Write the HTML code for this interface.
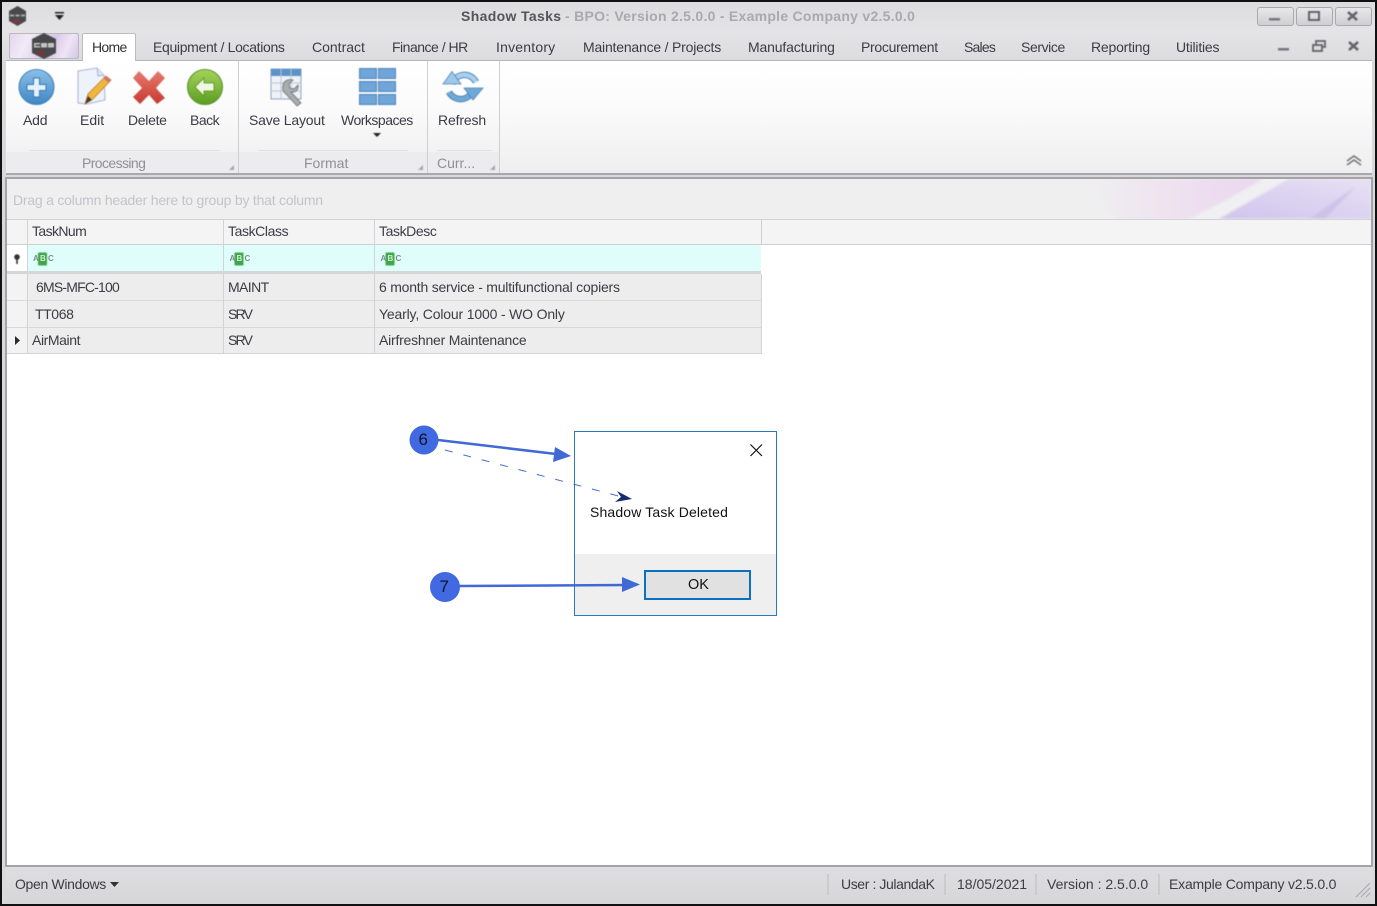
<!DOCTYPE html>
<html>
<head>
<meta charset="utf-8">
<title>Shadow Tasks</title>
<style>
html,body{margin:0;padding:0;background:#000;}
#p{position:relative;width:1377px;height:906px;overflow:hidden;background:#d9d9db;font-family:"Liberation Sans",sans-serif;font-size:14px;color:#3c3c42;}
.t{position:absolute;white-space:nowrap;line-height:16px;filter:blur(.35px);}
.b{position:absolute;}
svg{position:absolute;overflow:visible;}
.i{filter:blur(.4px);}
.abc{position:absolute;font-size:8px;line-height:10px;color:#7d8d84;font-weight:bold;filter:blur(.2px);}
</style>
</head>
<body>
<div id="p">
<!-- title and tab background -->
<div class="b" style="left:2px;top:2px;width:1373px;height:58px;background:linear-gradient(#dcdcde,#e4e4e6 50%,#dcdcde)"></div>

<!-- app icon small -->
<svg class="i" style="left:0;top:0" width="70" height="30">
<polygon points="17.500,6 26,11 26,21 17.500,26 9,21 9,11" fill="#49494b"/>
<path d="M10 14.500h4v2h-4zM15.500 14.500h4v2h-4zM21 14.500h4v2h-4z" fill="#a8a8a8"/>
<circle cx="16" cy="21" r="2.800" fill="#7c3a3a"/>
<rect x="55" y="12" width="9" height="1.500" fill="#222"/>
<polygon points="55,15 64,15 59.500,20" fill="#222"/>
</svg>
<div class="t" style="left:461px;top:8px;font-weight:bold;color:#555559;letter-spacing:.35px">Shadow Tasks</div>
<div class="t" style="left:565px;top:8px;font-weight:bold;color:#a9a9ae;letter-spacing:.27px">- BPO: Version 2.5.0.0 - Example Company v2.5.0.0</div>

<!-- window buttons -->
<div class="b" style="left:1257px;top:7px;width:35px;height:17px;border:1px solid #a9a9ad;border-radius:3px;background:linear-gradient(#e8e8ea,#cfcfd2)"></div>
<div class="b" style="left:1296px;top:7px;width:35px;height:17px;border:1px solid #a9a9ad;border-radius:3px;background:linear-gradient(#e8e8ea,#cfcfd2)"></div>
<div class="b" style="left:1335px;top:7px;width:35px;height:17px;border:1px solid #a9a9ad;border-radius:3px;background:linear-gradient(#e8e8ea,#cfcfd2)"></div>
<svg class="i" style="left:0;top:0" width="1377" height="60">
<rect x="1269" y="18" width="11" height="2.500" fill="#77777b"/>
<rect x="1309" y="12" width="10" height="8" fill="none" stroke="#66666a" stroke-width="2"/>
<path d="M1348 12L1357 20M1357 12L1348 20" stroke="#66666a" stroke-width="2.600"/>
<rect x="1278" y="48" width="11" height="2.500" fill="#77777b"/>
<rect x="1316" y="41" width="9" height="6" fill="none" stroke="#66666a" stroke-width="1.800"/>
<rect x="1313" y="45" width="9" height="6" fill="#dcdcde" stroke="#66666a" stroke-width="1.800"/>
<path d="M1349 42L1358 50M1358 42L1349 50" stroke="#66666a" stroke-width="2.600"/>
</svg>

<!-- app button -->
<div class="b" style="left:9px;top:33px;width:68px;height:24px;border:1px solid #b9b9bd;border-radius:2px;background:linear-gradient(115deg,#e3d6ee,#f2eaf6 25%,#d9c8ea 60%,#efe5f5 80%,#d5c4e8)"></div>
<svg class="i" style="left:0;top:0" width="80" height="62">
<polygon points="44,33 56,39 56,53 44,59 32,53 32,39" fill="#48484a"/>
<path d="M34 43h6v1.500h-4.500v1.500h4.500v1.500h-6zM41 43h6v4.500h-6zM48 43h6v4.500h-6z" fill="#c4c4c4"/>
<circle cx="41" cy="53" r="3" fill="#7a3636"/>
</svg>

<!-- ribbon panel -->
<div class="b" style="left:6px;top:60px;width:1366px;height:113px;border-top:1px solid #b5b5b9;background:linear-gradient(#ffffff,#fbfbfc 40%,#eeeeef);box-sizing:border-box"></div>
<div class="b" style="left:6px;top:173px;width:1366px;height:2px;background:#a9a9ad"></div>
<!-- Home tab -->
<div class="b" style="left:82px;top:33px;width:54px;height:28px;background:#fff;border:1px solid #bcbcc0;border-bottom:none;border-radius:2px 2px 0 0;box-sizing:border-box"></div>
<div class="t" style="left:92px;top:39px;color:#333;letter-spacing:-.7px">Home</div>
<div class="t" style="left:153px;top:39px;letter-spacing:-.33px">Equipment / Locations</div>
<div class="t" style="left:312px;top:39px">Contract</div>
<div class="t" style="left:392px;top:39px;letter-spacing:-.5px">Finance / HR</div>
<div class="t" style="left:496px;top:39px;letter-spacing:.2px">Inventory</div>
<div class="t" style="left:583px;top:39px;letter-spacing:-.2px">Maintenance / Projects</div>
<div class="t" style="left:748px;top:39px;letter-spacing:-.15px">Manufacturing</div>
<div class="t" style="left:861px;top:39px;letter-spacing:-.3px">Procurement</div>
<div class="t" style="left:964px;top:39px;letter-spacing:-.8px">Sales</div>
<div class="t" style="left:1021px;top:39px;letter-spacing:-.4px">Service</div>
<div class="t" style="left:1091px;top:39px;letter-spacing:-.2px">Reporting</div>
<div class="t" style="left:1176px;top:39px;letter-spacing:-.2px">Utilities</div>

<!-- ribbon groups -->
<div class="b" style="left:238px;top:61px;width:1px;height:112px;background:#cfcfd2"></div>
<div class="b" style="left:427px;top:61px;width:1px;height:112px;background:#cfcfd2"></div>
<div class="b" style="left:499px;top:61px;width:1px;height:112px;background:#cfcfd2"></div>
<div class="b" style="left:7px;top:152px;width:231px;height:21px;background:#ececee"></div>
<div class="b" style="left:239px;top:152px;width:188px;height:21px;background:#ececee"></div>
<div class="b" style="left:428px;top:152px;width:71px;height:21px;background:#ececee"></div>
<div class="b" style="left:30px;top:150px;width:190px;height:1px;background:#e0e0e2"></div>
<div class="b" style="left:258px;top:150px;width:150px;height:1px;background:#e0e0e2"></div>
<div class="b" style="left:437px;top:150px;width:55px;height:1px;background:#e0e0e2"></div>

<svg class="i" style="left:0;top:0" width="520" height="175">
<defs>
<linearGradient id="bl" x1="0" y1="0" x2="0" y2="1"><stop offset="0" stop-color="#8cc0e8"/><stop offset="1" stop-color="#3f86c6"/></linearGradient>
<linearGradient id="gr" x1="0" y1="0" x2="0" y2="1"><stop offset="0" stop-color="#a6d35a"/><stop offset="1" stop-color="#5a9e22"/></linearGradient>
<linearGradient id="rd" x1="0" y1="0" x2="0" y2="1"><stop offset="0" stop-color="#e67a6e"/><stop offset="1" stop-color="#c63a30"/></linearGradient>
</defs>
<!-- add -->
<circle cx="36.500" cy="87" r="17.500" fill="url(#bl)" stroke="#3a7fb8"/>
<path d="M33.500 78h6v6.500h6.500v6h-6.500v6.500h-6v-6.500h-6.500v-6h6.500z" fill="#e4f0fa" stroke="#3a78b0" stroke-width="1"/>
<!-- edit -->
<path d="M78 71L97 68L104 75L105 100L87 104L78 103Z" fill="#eef2fa" stroke="#a8b4d4"/>
<path d="M97 68L98 76L104 75" fill="#dfe5f3" stroke="#a8b4d4"/>
<path d="M85 104L88 94L106 76L111 80L93 99Z" fill="#f0b63e" stroke="#b77f24" stroke-width=".8"/>
<path d="M106 76L111 80L109 83L103.500 78.500Z" fill="#d9736a"/>
<path d="M85 104L88 96L92 100Z" fill="#4a3a2a"/>
<!-- delete -->
<path d="M139 71L149 81L158 71L165 78L156 88L165 98L157 104L149 95L140 104L133 97L142 88L133 78Z" fill="url(#rd)"/>
<!-- back -->
<circle cx="205" cy="87" r="17.500" fill="url(#gr)" stroke="#588f28"/>
<path d="M195 87L204 78V83H214V91H204V96Z" fill="#eff7e0" stroke="#558f22" stroke-width=".8"/>
<!-- save layout -->
<rect x="271" y="69" width="30" height="30" fill="#eef2f6" stroke="#8ea6be"/>
<rect x="271" y="69" width="30" height="7" fill="#5b93c9"/>
<path d="M281 69V99M291 69V99M271 83H301M271 91H301" stroke="#b8c6d4"/>
<path d="M283 85c1-5 6-6 10-5l-4 4 1 4 4 1 4-4c1 4-2 8-7 7l10 11-4 3-11-12c-3-2-4-5-3-9z" fill="#a9acae" stroke="#6d7072" stroke-width=".8"/>
<!-- workspaces -->
<g fill="#6fa5d8" stroke="#4d86bd">
<rect x="359.500" y="68.500" width="17" height="10"/><rect x="378.500" y="68.500" width="17" height="10"/>
<rect x="359.500" y="81.500" width="17" height="10"/><rect x="378.500" y="81.500" width="17" height="10"/>
<rect x="359.500" y="94.500" width="17" height="10"/><rect x="378.500" y="94.500" width="17" height="10"/>
</g>
<polygon points="373,133 381,133 377,137" fill="#222"/>
<!-- refresh -->
<path d="M452 84A13 13 0 0 1 476 82" fill="none" stroke="#4f86b4" stroke-width="6.500"/>
<path d="M452 84A13 13 0 0 1 476 82" fill="none" stroke="#a9d0ee" stroke-width="4.500"/>
<polygon points="452,71.500 443,84 461,84" fill="#9cc8ea" stroke="#4f86b4" stroke-width=".8"/>
<path d="M473 90A13 13 0 0 1 449 92" fill="none" stroke="#4f86b4" stroke-width="6.500"/>
<path d="M473 90A13 13 0 0 1 449 92" fill="none" stroke="#6fa9d8" stroke-width="4.500"/>
<polygon points="473,100 464,88 483,88" fill="#6fa9d8" stroke="#4f86b4" stroke-width=".8"/>
<!-- corner grips -->
<path d="M229 170h5v-5zM418 170h5v-5zM490 170h5v-5z" fill="#a8a8ac"/>
<path d="M1347 161l7-5 7 5M1347 165l7-5 7 5" fill="none" stroke="#77777b" stroke-width="1.600"/>
</svg>

<div class="t" style="left:23px;top:112px;letter-spacing:-.2px">Add</div>
<div class="t" style="left:80px;top:112px">Edit</div>
<div class="t" style="left:128px;top:112px;letter-spacing:-.3px">Delete</div>
<div class="t" style="left:190px;top:112px;letter-spacing:-.5px">Back</div>
<div class="t" style="left:249px;top:112px;letter-spacing:-.2px">Save Layout</div>
<div class="t" style="left:341px;top:112px;letter-spacing:-.5px">Workspaces</div>
<div class="t" style="left:438px;top:112px;letter-spacing:-.15px">Refresh</div>
<div class="t" style="left:82px;top:155px;color:#8f8f94;letter-spacing:-.6px">Processing</div>
<div class="t" style="left:304px;top:155px;color:#8f8f94">Format</div>
<div class="t" style="left:437px;top:155px;color:#8f8f94">Curr...</div>

<!-- main content -->
<div class="b" style="left:5px;top:177px;width:1368px;height:690px;background:#fff;border:2px solid #a4a4a8;box-sizing:border-box"></div>
<!-- group panel -->
<div class="b" style="left:7px;top:179px;width:1364px;height:41px;background:#efeff0;border-bottom:1px solid #d3d3d6;box-sizing:border-box;overflow:hidden">
<svg style="left:0;top:0;filter:blur(1.2px)" width="1364" height="41">
<defs>
<linearGradient id="sw" x1="0" x2="1" y1="0" y2="0"><stop offset="0" stop-color="#efeff0"/><stop offset=".7" stop-color="#eddcef"/><stop offset="1" stop-color="#ead8ef"/></linearGradient>
<linearGradient id="pu" x1="0" x2="1" y1="1" y2="0"><stop offset="0" stop-color="#cfc4ec"/><stop offset=".4" stop-color="#d9cff0"/><stop offset="1" stop-color="#e8e0f3"/></linearGradient>
</defs>
<path d="M1080 0H1262L1180 41H1110Z" fill="url(#sw)"/>
<path d="M1210 40L1280 0H1364V40Z" fill="url(#pu)"/>
<path d="M1256 0H1282L1212 40H1186Z" fill="#f0eff2"/>
<path d="M1302 40L1348 8L1318 40Z" fill="#cdc3e8"/>
</svg>
</div>
<div class="t" style="left:13px;top:192px;color:#c4c4c8;letter-spacing:-.22px">Drag a column header here to group by that column</div>

<!-- headers -->
<div class="b" style="left:7px;top:220px;width:1364px;height:25px;background:#f4f4f5;border-bottom:1px solid #cfcfd2;box-sizing:border-box"></div>
<div class="b" style="left:27px;top:220px;width:1px;height:134px;background:#d3d3d6"></div>
<div class="b" style="left:223px;top:220px;width:1px;height:134px;background:#d3d3d6"></div>
<div class="b" style="left:374px;top:220px;width:1px;height:134px;background:#d3d3d6"></div>
<div class="b" style="left:761px;top:220px;width:1px;height:25px;background:#cfcfd2"></div>
<div class="t" style="left:32px;top:223px;letter-spacing:-.6px">TaskNum</div>
<div class="t" style="left:228px;top:223px;letter-spacing:-.4px">TaskClass</div>
<div class="t" style="left:379px;top:223px;letter-spacing:-.4px">TaskDesc</div>

<!-- filter row -->
<div class="b" style="left:28px;top:245px;width:733px;height:26px;background:#dffdfb"></div>
<div class="b" style="left:7px;top:271px;width:754px;height:3px;background:#d6d6d8"></div>
<div class="b" style="left:223px;top:245px;width:1px;height:26px;background:#d3d3d6"></div>
<div class="b" style="left:374px;top:245px;width:1px;height:26px;background:#d3d3d6"></div>
<svg class="i" style="left:0;top:0" width="420" height="350">
<circle cx="17" cy="257" r="2.800" fill="#333"/><rect x="16.200" y="258" width="1.600" height="6" fill="#333"/>
<rect x="38" y="252.500" width="9" height="13" rx="1" fill="#3ea648"/>
<rect x="234.500" y="252.500" width="9" height="13" rx="1" fill="#3ea648"/>
<rect x="385.500" y="252.500" width="9" height="13" rx="1" fill="#3ea648"/>
</svg>
<div class="abc" style="left:33px;top:254px">A</div><div class="abc" style="left:40px;top:254px;color:#cfeed0">B</div><div class="abc" style="left:48px;top:254px">C</div>
<div class="abc" style="left:229.500px;top:254px">A</div><div class="abc" style="left:236.500px;top:254px;color:#cfeed0">B</div><div class="abc" style="left:244.500px;top:254px">C</div>
<div class="abc" style="left:380.500px;top:254px">A</div><div class="abc" style="left:387.500px;top:254px;color:#cfeed0">B</div><div class="abc" style="left:395.500px;top:254px">C</div>

<!-- rows -->
<div class="b" style="left:28px;top:274px;width:733px;height:80px;background:#ededed"></div>
<div class="b" style="left:7px;top:274px;width:20px;height:80px;background:#f3f3f4"></div>
<div class="b" style="left:7px;top:300px;width:754px;height:1px;background:#d8d8da"></div>
<div class="b" style="left:7px;top:327px;width:754px;height:1px;background:#d8d8da"></div>
<div class="b" style="left:7px;top:353px;width:754px;height:1px;background:#d3d3d6"></div>
<div class="b" style="left:223px;top:274px;width:1px;height:80px;background:#d3d3d6"></div>
<div class="b" style="left:374px;top:274px;width:1px;height:80px;background:#d3d3d6"></div>
<div class="b" style="left:27px;top:274px;width:1px;height:80px;background:#d3d3d6"></div>
<div class="b" style="left:761px;top:274px;width:1px;height:80px;background:#d3d3d6"></div>
<svg style="left:0;top:0" width="30" height="350"><polygon points="15,336 20,340.500 15,345" fill="#2c2c2c"/></svg>
<div class="t" style="left:36px;top:279px;letter-spacing:-.8px">6MS-MFC-100</div>
<div class="t" style="left:228px;top:279px;letter-spacing:-.6px">MAINT</div>
<div class="t" style="left:379px;top:279px;letter-spacing:-.22px">6 month service - multifunctional copiers</div>
<div class="t" style="left:35px;top:306px;letter-spacing:-.4px">TT068</div>
<div class="t" style="left:228px;top:306px;letter-spacing:-1.800px">SRV</div>
<div class="t" style="left:379px;top:306px;letter-spacing:-.17px">Yearly, Colour 1000 - WO Only</div>
<div class="t" style="left:32px;top:332px;letter-spacing:-.4px">AirMaint</div>
<div class="t" style="left:228px;top:332px;letter-spacing:-1.800px">SRV</div>
<div class="t" style="left:379px;top:332px;letter-spacing:-.22px">Airfreshner Maintenance</div>

<!-- dialog -->
<div class="b" style="left:574px;top:431px;width:203px;height:185px;background:#fff;border:1px solid #2a78c0;box-sizing:border-box"></div>
<div class="b" style="left:575px;top:554px;width:201px;height:61px;background:#efefef"></div>
<div class="t" style="left:590px;top:504px;color:#111;letter-spacing:.15px">Shadow Task Deleted</div>
<div class="b" style="left:644px;top:570px;width:107px;height:30px;background:#e1e1e1;border:2px solid #0a70c2;box-sizing:border-box"></div>
<div class="t" style="left:688px;top:577px;color:#111;font-size:14.500px">OK</div>
<svg style="left:0;top:0" width="1377" height="906">
<path d="M750.500 444.500L762 456M762 444.500L750.500 456" stroke="#111" stroke-width="1.200" fill="none"/>
<path d="M445 450L622 497" stroke="#4169d6" stroke-width="1" stroke-dasharray="8 11" fill="none"/>
<path d="M617 491L632 499L615 502L621 497Z" fill="#1a2a70"/>
<path d="M438 440L556 454" stroke="#4169d6" stroke-width="2.500" fill="none"/>
<polygon points="571,456 553,462 555,447" fill="#4169d6"/>
<path d="M458 586L626 585" stroke="#4169d6" stroke-width="2.500" fill="none"/>
<polygon points="640,584.500 622,577 622,592" fill="#4169d6"/>
<circle cx="424" cy="440" r="14.500" fill="#4169e1"/>
<circle cx="445" cy="587" r="15" fill="#4169e1"/>
</svg>
<div class="t" style="left:418.500px;top:431px;color:#0b1430;font-size:17px;line-height:18px">6</div>
<div class="t" style="left:439.500px;top:578px;color:#0b1430;font-size:17px;line-height:18px">7</div>

<!-- status bar -->
<div class="b" style="left:5px;top:867px;width:1368px;height:37px;background:linear-gradient(#dedee0,#d6d6d9)"></div>
<div class="t" style="left:15px;top:876px;letter-spacing:-.33px">Open Windows</div>
<svg style="left:0;top:860px" width="1377" height="46">
<polygon points="110,22 119,22 114.500,27" fill="#333"/>
<path d="M828 14V35M945 14V35M1036 14V35M1159 14V35" stroke="#bcbcc0"/>
<path d="M1356 37L1370 23M1361 37L1370 28M1366 37L1370 33" stroke="#a9a9ad"/>
</svg>
<div class="t" style="left:841px;top:876px;letter-spacing:-.4px">User : JulandaK</div>
<div class="t" style="left:957px;top:876px">18/05/2021</div>
<div class="t" style="left:1047px;top:876px">Version : 2.5.0.0</div>
<div class="t" style="left:1169px;top:876px;letter-spacing:-.2px">Example Company v2.5.0.0</div>

<!-- outer frame -->
<div class="b" style="left:0;top:0;width:1377px;height:906px;border:2px solid #111;box-sizing:border-box;pointer-events:none"></div>
</div>
</body>
</html>
